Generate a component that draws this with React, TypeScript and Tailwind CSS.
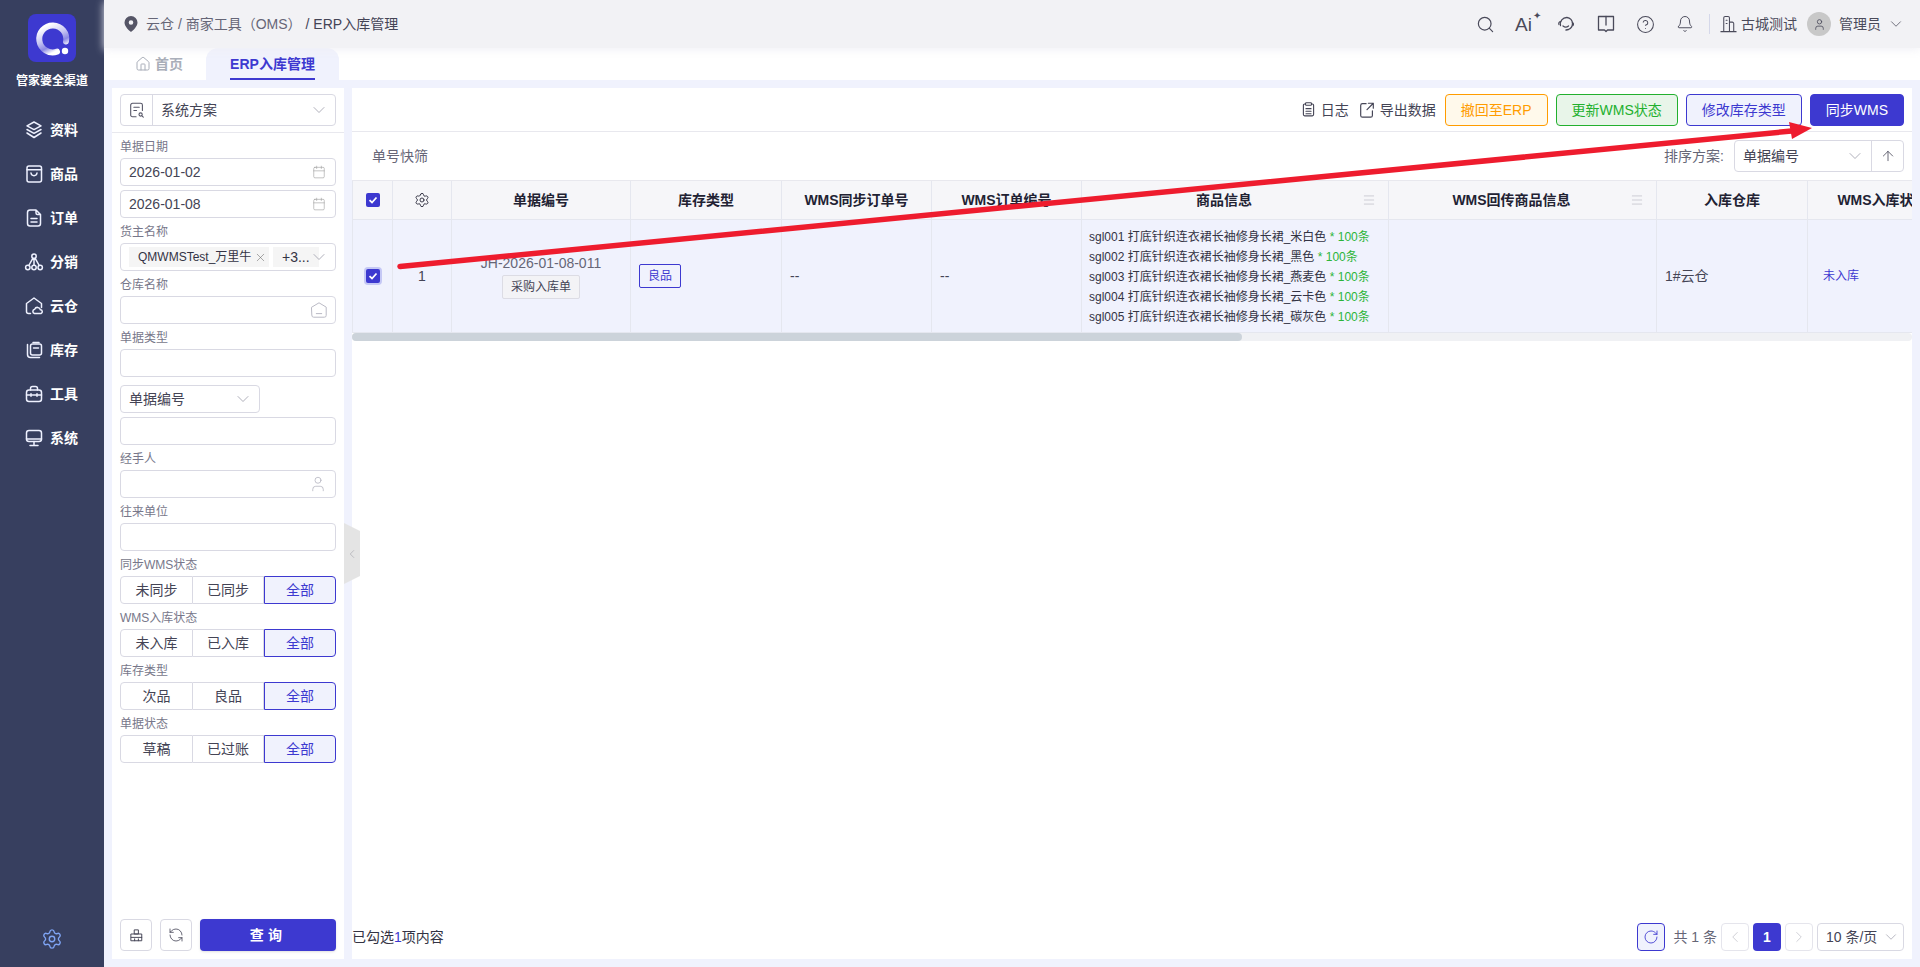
import React from 'react';
import {
  ArrowUp, Bell, Calendar, ChevronDown, ChevronLeft, ChevronRight, CircleHelp, House, Menu, RotateCw,
  RefreshCcw, Search, Settings, User, X,
} from 'lucide-react';

const Icon = ({ size = 20, width = 1.5, children }: { size?: number; width?: number; children: React.ReactNode }) => (
  <svg width={size} height={size} viewBox="0 0 20 20" fill="none" stroke="currentColor" strokeWidth={width} strokeLinecap="round" strokeLinejoin="round">
    {children}
  </svg>
);

const LayersIcon = () => (
  <Icon>
    <path d="M10 2 17 5.800 10 9.600 3 5.800z" />
    <path d="M3 9.500 10 13.300 17 9.500M3 13 10 17.500 17 13" />
  </Icon>
);

const BagIcon = () => (
  <Icon>
    <rect x="3" y="2" width="14.500" height="16" rx="2" />
    <path d="M3 5.800h14.500M7 9c.5 3.500 5.500 3.500 6 0" />
  </Icon>
);

const OrderIcon = () => (
  <Icon>
    <path d="M12 2H6a2.500 2.500 0 0 0-2.500 2.500v11A2.500 2.500 0 0 0 6 18h8a2.500 2.500 0 0 0 2.500-2.500V6.500zM12 2v3a1.500 1.500 0 0 0 1.500 1.500h3" />
    <path d="M7 10.500h6M7 14h6" />
  </Icon>
);

const TreeIcon = () => (
  <Icon>
    <circle cx="10" cy="4.200" r="2.200" />
    <circle cx="3.800" cy="15.500" r="2.200" />
    <circle cx="10" cy="15.500" r="2.200" />
    <circle cx="16.200" cy="15.500" r="2.200" />
    <path d="M10 6.500v6.800M8.800 6.300 4.800 13.500M11.200 6.300l4 7.200" />
  </Icon>
);

const CloudHouseIcon = () => (
  <Icon>
    <path d="M6.500 17.500H4.500A2 2 0 0 1 2.500 15.500V7.500L10 2l7.500 5.500v4" />
    <path d="M10.500 17.500a2.200 2.200 0 0 1 .2-4.300 3 3 0 0 1 5.700 .6 1.900 1.900 0 0 1 .6 3.700z" />
  </Icon>
);

const StockIcon = () => (
  <Icon>
    <path d="M3.500 4.500v10a3 3 0 0 0 3 3h9" />
    <rect x="6.500" y="4" width="11" height="11" rx="2" />
    <path d="M9 2.500h6M9.500 8h5" />
  </Icon>
);

const ToolboxIcon = () => (
  <Icon>
    <path d="M6.500 6V4.500A2 2 0 0 1 8.500 2.500h3a2 2 0 0 1 2 2V6" />
    <rect x="2.500" y="6" width="15" height="11.500" rx="2.500" />
    <path d="M2.500 11h15M7 9.800v2.400M13 9.800v2.400" />
  </Icon>
);

const MonitorIcon = () => (
  <Icon>
    <rect x="2.500" y="2.500" width="15" height="11" rx="2.500" />
    <path d="M2.500 11h15M10 13.500v3.500M6 17.500h8" />
  </Icon>
);

const SchemeIcon = () => (
  <Icon size={18} width={1.200}>
    <path d="M9 17.500H5a2 2 0 0 1-2-2v-11a2 2 0 0 1 2-2h9a2 2 0 0 1 2 2v6" />
    <path d="M6.500 7h6M6.500 10.500h3" />
    <circle cx="14" cy="15" r="1.800" />
    <path d="m15.500 16.500 1.500 1.500" />
  </Icon>
);

const WarehouseIcon = () => (
  <Icon size={18} width={1.100}>
    <path d="M2 6.800 10 2l8 4.800V16a2 2 0 0 1-2 2H4a2 2 0 0 1-2-2z" />
    <path d="M7 14h6" />
  </Icon>
);

const BroomIcon = () => (
  <Icon size={15} width={1.300}>
    <path d="M7.500 2.500h5v5.500h-5zM3 8h14v9H3zM3 12.500h14M7.500 17v-2.500M12.500 17v-2.500" />
  </Icon>
);

const HeadsetIcon = () => (
  <Icon size={20} width={1.300}>
    <path d="M4.500 11.500A6.500 6.500 0 0 1 11 3.500a6 6 0 0 1 5.500 6c0 2.800-1.800 5-4 6l-2.500 .5" />
    <path d="M4.500 7.500C3 8 2.500 9 3 10.500M7 12c1.500 1.200 4 1.200 5.500 0" />
    <path d="M16.500 8.500c1 .5 1.200 2 .5 3" />
  </Icon>
);

const BookIcon = () => (
  <Icon size={20} width={1.300}>
    <path d="M2.500 2.500h15v13.500H11.500L10 17.500 8.500 16H2.500z" />
    <path d="M10 2.500V11" />
  </Icon>
);

const TenantIcon = () => (
  <Icon size={19} width={1.100}>
    <path d="M5 17.500V3a1.500 1.500 0 0 1 1.500-1.500h3A1.500 1.500 0 0 1 11 3v14.500M11 7.500h3a1.500 1.500 0 0 1 1.500 1.500v8.500M2 17.500h16M7.500 5.500h1M7.500 9h1" />
  </Icon>
);

const LogIcon = () => (
  <Icon size={17} width={1.300}>
    <path d="M6.500 3.500H5.500A1.500 1.500 0 0 0 4 5v11a1.500 1.500 0 0 0 1.500 1.500h9A1.500 1.500 0 0 0 16 16V5a1.500 1.500 0 0 0-1.500-1.500h-1" />
    <rect x="6.500" y="2" width="7" height="3" rx="1" />
    <path d="M7 9h6M7 12h6M7 15h6" />
  </Icon>
);

const ExportIcon = () => (
  <Icon size={18} width={1.300}>
    <path d="M9 3H5a2 2 0 0 0-2 2v11a2 2 0 0 0 2 2h9a2 2 0 0 0 2-2v-5" />
    <path d="M11.500 2.500H17v5.500M17 2.500l-7 7" />
  </Icon>
);

const Logo = () => (
  <div className="w-12 h-12 rounded-lg bg-[#3d39d0]">
    <svg width="48" height="48" viewBox="0 0 48 48" fill="none">
      <defs>
        <linearGradient id="ring" x1="14" y1="14" x2="26" y2="38" gradientUnits="userSpaceOnUse">
          <stop stopColor="#ffffff" />
          <stop offset="0.45" stopColor="#c9c8f3" />
          <stop offset="0.75" stopColor="#8c89e4" />
          <stop offset="1" stopColor="#ffffff" />
        </linearGradient>
      </defs>
      <path d="M38 27.500A13.500 13.500 0 1 0 29 37.700" stroke="url(#ring)" strokeWidth="6" strokeLinecap="round" />
      <circle cx="37" cy="37" r="3.200" fill="#ffffff" />
    </svg>
  </div>
);

const navItems: { label: string; icon: React.ReactNode }[] = [
  { label: '资料', icon: <LayersIcon /> },
  { label: '商品', icon: <BagIcon /> },
  { label: '订单', icon: <OrderIcon /> },
  { label: '分销', icon: <TreeIcon /> },
  { label: '云仓', icon: <CloudHouseIcon /> },
  { label: '库存', icon: <StockIcon /> },
  { label: '工具', icon: <ToolboxIcon /> },
  { label: '系统', icon: <MonitorIcon /> },
];

const Sidebar = () => (
  <aside className="w-[104px] shrink-0 bg-[#373f5f] flex flex-col items-center text-white">
    <div className="mt-[14px]"><Logo /></div>
    <div className="mt-[11px] text-xs font-bold leading-4 whitespace-nowrap">管家婆全渠道</div>
    <nav className="mt-[19px] w-full flex flex-col">
      {navItems.map((item) => (
        <div key={item.label} className="h-[44px] flex items-center gap-[6px] pl-[24px]">
          <span className="w-5 text-[#eef1ff] flex justify-center">{item.icon}</span>
          <span className="text-sm font-bold">{item.label}</span>
        </div>
      ))}
    </nav>
    <div className="mt-auto mb-[17px] text-[#7fa5f5]">
      <Settings size={22} strokeWidth={1.5} />
    </div>
  </aside>
);

const TopBar = () => (
  <header className="h-12 shrink-0 bg-[#f2f2f5] flex items-center text-[#4a4a5a] text-sm shadow-[0_2px_8px_rgba(240,240,245,0.9)] relative">
    <svg width="14" height="16" viewBox="0 0 14 16" className="ml-[20px] text-[#555566]">
      <path fillRule="evenodd" fill="currentColor" d="M7 0a6.500 6.500 0 0 1 6.500 6.500C13.500 10.500 9 14.500 7 16 5 14.500.5 10.500.5 6.500A6.500 6.500 0 0 1 7 0zm0 4.200a2.300 2.300 0 1 0 0 4.600 2.300 2.300 0 0 0 0-4.600z" />
    </svg>
    <span className="ml-[8px] text-[#666677]">云仓 / 商家工具（OMS）</span>
    <span className="ml-[4px] text-[#444455]">/ ERP入库管理</span>
    <div className="ml-auto flex items-center">
      <Search size={19} strokeWidth={1.5} className="mr-[20px]" />
      <span className="relative mr-[24px] text-[19px] leading-none">Ai<span className="absolute -top-[4px] -right-[9px] text-[10px]">✦</span></span>
      <HeadsetIcon />
      <span className="w-5" />
      <BookIcon />
      <span className="w-5" />
      <CircleHelp size={19} strokeWidth={1.3} className="mr-[21px]" />
      <Bell size={18} strokeWidth={1.3} />
      <span className="w-px h-5 bg-[#d5d8ea] ml-[15px] mr-[9px]" />
      <TenantIcon />
      <span className="ml-[3px]">古城测试</span>
      <span className="ml-[10px] w-6 h-6 rounded-full bg-[#c8c8c8] flex items-center justify-center">
        <User size={13} strokeWidth={1.5} />
      </span>
      <span className="ml-2">管理员</span>
      <ChevronDown size={18} strokeWidth={1} className="ml-[6px] mr-[15px]" />
    </div>
  </header>
);

const Tabs = () => (
  <div className="h-8 shrink-0 bg-white flex items-end text-sm">
    <div className="w-[102px] h-8 flex items-center pl-[31px] gap-1 text-[#a9aeb9] font-bold">
      <House size={16} strokeWidth={1.5} />
      <span>首页</span>
    </div>
    <div className="w-[133px] h-8 rounded-t-xl bg-[#f0f2fd] flex justify-center">
      <span className="h-8 border-b-2 border-[#3d39d0] text-[#3d39d0] font-bold leading-8">ERP入库管理</span>
    </div>
  </div>
);

const Label = ({ children }: { children: React.ReactNode }) => (
  <div className="h-[25px] pt-[6px] text-xs leading-4 text-[#77778a]">{children}</div>
);

const Field = ({ children }: { children?: React.ReactNode }) => (
  <div className="h-7 rounded border border-[#d9d9e3] bg-white flex items-center px-2 text-sm text-[#444455]">{children}</div>
);

const Segmented = ({ items }: { items: string[] }) => (
  <div className="h-7 grid grid-cols-[73px_71px_72px] text-sm text-[#444455]">
    <div className="rounded-l border border-[#d9d9e3] flex items-center justify-center">{items[0]}</div>
    <div className="border-y border-r border-[#d9d9e3] flex items-center justify-center">{items[1]}</div>
    <div className="rounded-r border border-[#3d39d0] bg-[#f0f2fd] text-[#3d39d0] flex items-center justify-center">全部</div>
  </div>
);

const FilterPanel = () => (
  <section className="w-[232px] shrink-0 bg-white flex flex-col relative">
    <div className="h-[45px] shrink-0 border-b border-[#e8e8ee] px-2 pt-[6px]">
      <div className="h-8 rounded border border-[#d9d9e3] flex items-center text-sm text-[#444455]">
        <span className="w-8 h-full border-r border-[#d9d9e3] flex items-center justify-center text-[#555566]">
          <SchemeIcon />
        </span>
        <span className="ml-2">系统方案</span>
        <ChevronDown size={20} strokeWidth={1} className="ml-auto mr-[6px] text-[#a0a0ad]" />
      </div>
    </div>
    <div className="flex-1 px-2 flex flex-col">
      <Label>单据日期</Label>
      <Field>2026-01-02<Calendar size={14} strokeWidth={1} className="ml-auto mr-[1px] text-[#999]" /></Field>
      <div className="mt-1"><Field>2026-01-08<Calendar size={14} strokeWidth={1} className="ml-auto mr-[1px] text-[#999]" /></Field></div>
      <Label>货主名称</Label>
      <div className="h-7 rounded border border-[#d9d9e3] flex items-center pl-2 text-xs text-[#333344] relative overflow-hidden">
        <span className="h-5 w-[140px] shrink-0 bg-[#f5f5f5] flex items-center pl-[9px] whitespace-nowrap">QMWMSTest_万里牛<X size={13} strokeWidth={1} className="ml-[3px] text-[#666]" /></span>
        <span className="h-5 w-[46px] shrink-0 ml-1 bg-[#f5f5f5] pl-[9px] text-sm leading-5">+3...</span>
        <ChevronDown size={20} strokeWidth={1} className="absolute right-[6px] top-[3px] text-[#a0a0ad]" />
      </div>
      <Label>仓库名称</Label>
      <Field><span className="ml-auto -mr-[1px] text-[#b9b9c4]"><WarehouseIcon /></span></Field>
      <Label>单据类型</Label>
      <Field />
      <div className="mt-2 w-[140px]">
        <Field>单据编号<ChevronDown size={20} strokeWidth={1} className="ml-auto -mr-[2px] text-[#a0a0ad]" /></Field>
      </div>
      <div className="mt-1"><Field /></div>
      <Label>经手人</Label>
      <Field><User size={18} strokeWidth={1} className="ml-auto text-[#b0b0bc]" /></Field>
      <Label>往来单位</Label>
      <Field />
      <Label>同步WMS状态</Label>
      <Segmented items={['未同步', '已同步']} />
      <Label>WMS入库状态</Label>
      <Segmented items={['未入库', '已入库']} />
      <Label>库存类型</Label>
      <Segmented items={['次品', '良品']} />
      <Label>单据状态</Label>
      <Segmented items={['草稿', '已过账']} />
      <div className="mt-auto mb-2 flex gap-2">
        <button className="w-8 h-8 rounded border border-[#d9d9e3] flex items-center justify-center text-[#444455]"><BroomIcon /></button>
        <button className="w-8 h-8 rounded border border-[#d9d9e3] flex items-center justify-center text-[#444455]"><RefreshCcw size={16} strokeWidth={1.2} /></button>
        <button className="flex-1 h-8 rounded bg-[#3d39d0] text-white text-sm font-bold tracking-[0.3em] shadow-sm">查询</button>
      </div>
    </div>
    <div className="absolute left-full top-[435px] w-4 h-[61px] bg-[#e4e4e4] [clip-path:polygon(0_0,100%_13%,100%_87%,0_100%)] flex items-center text-[#a0a0a8]">
      <ChevronLeft size={14} strokeWidth={1} className="ml-[1px]" />
    </div>
  </section>
);

const ActionButton = ({ className, children }: { className: string; children: React.ReactNode }) => (
  <button className={`h-8 px-[15px] rounded border text-sm whitespace-nowrap ${className}`}>{children}</button>
);

const gridCols = 'grid grid-cols-[40px_59px_179px_151px_150px_150px_307px_268px_151px_150px_150px]';

const headers = ['单据编号', '库存类型', 'WMS同步订单号', 'WMS订单编号', '商品信息', 'WMS回传商品信息', '入库仓库', 'WMS入库状态'];

const products = [
  'sgl001 打底针织连衣裙长袖修身长裙_米白色',
  'sgl002 打底针织连衣裙长袖修身长裙_黑色',
  'sgl003 打底针织连衣裙长袖修身长裙_燕麦色',
  'sgl004 打底针织连衣裙长袖修身长裙_云卡色',
  'sgl005 打底针织连衣裙长袖修身长裙_碳灰色',
];

const Check = ({ ring }: { ring?: boolean }) => (
  <span className={`w-[14px] h-[14px] rounded-[2px] bg-[#3d39d0] flex items-center justify-center ${ring ? 'ring-2 ring-[#c5c8f5]' : ''}`}>
    <svg width="10" height="10" viewBox="0 0 10 10" fill="none" stroke="#fff" strokeWidth="1.800"><path d="M1.500 5.200 4 7.500 8.500 2.500" /></svg>
  </span>
);

const DataTable = () => (
  <div className="overflow-hidden border-t border-[#e8e8ee]">
    <div className={`${gridCols} w-[1806px] h-[39px] bg-[#f6f6f9] border-b border-[#e5e7ef] text-sm font-bold text-[#222233]`}>
      <div className="border-l border-[#e5e7ef] flex items-center justify-center"><Check /></div>
      <div className="border-l border-[#e5e7ef] flex items-center justify-center"><Settings size={16} strokeWidth={1.3} /></div>
      {headers.map((h) => {
        const hasMenu = h === '商品信息' || h === 'WMS回传商品信息';
        return (
          <div key={h} className={`border-l border-[#e5e7ef] flex items-center justify-center relative whitespace-nowrap ${hasMenu ? 'pr-[22px]' : ''}`}>
            {h}
            {hasMenu && <Menu size={14} strokeWidth={1.5} className="absolute right-[12px] text-[#c8c8d0]" />}
          </div>
        );
      })}
    </div>
    <div className={`${gridCols} w-[1806px] h-[113px] bg-[#f0f2fd] border-b border-[#e5e7ef] text-sm text-[#444455]`}>
      <div className="border-l border-[#e5e7ef] flex items-center justify-center"><Check ring /></div>
      <div className="border-l border-[#e5e7ef] flex items-center justify-center">1</div>
      <div className="border-l border-[#e5e7ef] flex flex-col items-center justify-center gap-[2px] text-[#666677]">
        <span className="leading-5">JH-2026-01-08-011</span>
        <span className="h-6 w-[78px] rounded-[2px] border border-[#dcdce4] bg-[#f3f3f6] text-xs leading-[22px] text-center text-[#444455]">采购入库单</span>
      </div>
      <div className="border-l border-[#e5e7ef] flex items-center pl-[8px]">
        <span className="w-[42px] h-6 rounded-[2px] border border-[#3d39d0] text-xs leading-[22px] text-center text-[#3d39d0]">良品</span>
      </div>
      <div className="border-l border-[#e5e7ef] flex items-center pl-2">--</div>
      <div className="border-l border-[#e5e7ef] flex items-center pl-2">--</div>
      <div className="border-l border-[#e5e7ef] flex flex-col justify-center pl-[7px] pt-[2px] text-xs leading-5 text-[#333344] whitespace-nowrap">
        {products.map((name) => (
          <div key={name}>{name} <span className="text-[#2cb53a]">* 100条</span></div>
        ))}
      </div>
      <div className="border-l border-[#e5e7ef]" />
      <div className="border-l border-[#e5e7ef] flex items-center pl-2">1#云仓</div>
      <div className="border-l border-[#e5e7ef] flex items-center pl-[15px] text-xs text-[#3d39d0]">未入库</div>
      <div className="border-l border-[#e5e7ef]" />
    </div>
    <div className="h-2 bg-[#f0f1f4] rounded-[4px]">
      <div className="w-[890px] h-full rounded-[4px] bg-[#ccd3da]" />
    </div>
  </div>
);

const MainPanel = () => (
  <section className="w-[1560px] shrink-0 bg-white flex flex-col">
    <div className="h-[43px] shrink-0 flex items-center justify-end pr-2 gap-2 text-sm text-[#444455]">
      <span className="flex items-center gap-[4px] mr-[1px]"><LogIcon />日志</span>
      <span className="flex items-center gap-[4px] mr-[1px]"><ExportIcon />导出数据</span>
      <ActionButton className="border-[#ff9c00] bg-[#fff9eb] text-[#ff9c00]">撤回至ERP</ActionButton>
      <ActionButton className="border-[#22b02e] bg-[#e8f5e9] text-[#22b02e]">更新WMS状态</ActionButton>
      <ActionButton className="border-[#3d39d0] bg-[#f0f2fd] text-[#3d39d0]">修改库存类型</ActionButton>
      <ActionButton className="border-[#3d39d0] bg-[#3d39d0] text-white">同步WMS</ActionButton>
    </div>
    <div className="h-[49px] shrink-0 border-t border-[#e8e8ee] flex items-center pl-5 pr-2 text-sm text-[#666677]">
      <span>单号快筛</span>
      <span className="ml-auto mr-[10px]">排序方案:</span>
      <div className="h-8 w-[170px] rounded border border-[#d9d9e3] flex items-center text-[#444455]">
        <span className="ml-2">单据编号</span>
        <ChevronDown size={20} strokeWidth={1} className="ml-auto mr-[6px] text-[#a0a0ad]" />
        <span className="w-8 h-full border-l border-[#d9d9e3] flex items-center justify-center"><ArrowUp size={16} strokeWidth={1.2} /></span>
      </div>
    </div>
    <DataTable />
    <div className="mt-auto h-[28px] mb-2 flex items-center pr-2 text-sm text-[#444455]">
      <span className="text-[#333344]">已勾选<span className="text-[#3d39d0]">1</span>项内容</span>
      <button className="ml-auto w-7 h-7 rounded border border-[#3d39d0] bg-[#f0f2fd] flex items-center justify-center text-[#3d39d0]"><RotateCw size={16} strokeWidth={1.3} /></button>
      <span className="ml-2 mr-1 text-[#666677]">共 1 条</span>
      <button className="w-7 h-7 rounded border border-[#e5e5ec] flex items-center justify-center text-[#c0c0c8]"><ChevronLeft size={18} strokeWidth={1} /></button>
      <button className="ml-1 w-7 h-7 rounded bg-[#3d39d0] text-white font-bold">1</button>
      <button className="ml-1 w-7 h-7 rounded border border-[#e5e5ec] flex items-center justify-center text-[#c0c0c8]"><ChevronRight size={18} strokeWidth={1} /></button>
      <div className="ml-1 w-[87px] h-7 rounded border border-[#d9d9e3] flex items-center pl-2 whitespace-nowrap">10 条/页<ChevronDown size={18} strokeWidth={1} className="ml-auto mr-[3px] text-[#a0a0ad]" /></div>
    </div>
  </section>
);

const Arrow = () => (
  <svg className="absolute inset-0 pointer-events-none" width="1920" height="967" viewBox="0 0 1920 967" fill="none">
    <path d="M400 266.500 1797 130.500" stroke="#ee1c2e" strokeWidth="5.500" strokeLinecap="round" />
    <polygon points="1789,122 1812,128 1792,139" fill="#ee1c2e" />
  </svg>
);

export default function App() {
  return (
    <div className="relative w-[1920px] h-[967px] overflow-hidden flex bg-[#f0f2fd] font-['Liberation_Sans','Noto_Sans_CJK_SC',sans-serif]">
      <Sidebar />
      <div className="flex-1 flex flex-col min-w-0">
        <TopBar />
        <Tabs />
        <main className="flex-1 flex gap-2 p-2 min-h-0">
          <FilterPanel />
          <MainPanel />
        </main>
      </div>
      <Arrow />
    </div>
  );
}
